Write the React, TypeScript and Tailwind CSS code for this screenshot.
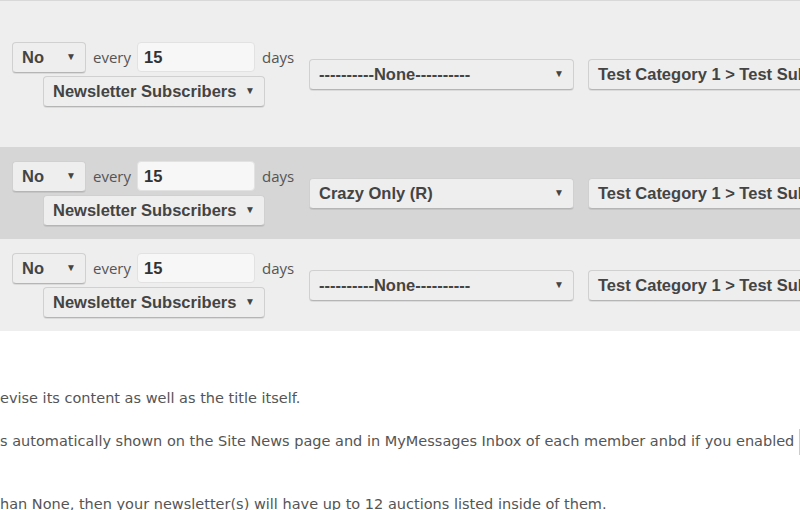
import React from "react";

const Caret = () => (
  <span className="text-[10px] leading-none text-[#444] shrink-0">▼</span>
);

function Sel({ label, w }: { label: string; w: string }) {
  return (
    <div
      className={`${w} shrink-0 h-[31px] px-[9px] flex items-center justify-between rounded-[4px] border border-[#d0d0d0] border-b-[#b5b5b5] bg-[#eeeeee] shadow-[0_1px_0_rgba(0,0,0,0.08)] text-[16.5px] font-bold text-[#444] whitespace-nowrap overflow-hidden`}
      style={{ fontFamily: '"Liberation Sans", Arial, sans-serif' }}
    >
      <span>{label}</span>
      <Caret />
    </div>
  );
}

function Row({ bg, h, middle }: { bg: string; h: string; middle: string }) {
  return (
    <div className={`${bg} ${h} flex items-center overflow-hidden`}>
      <div className="w-[297px] shrink-0 pl-[12px] flex flex-col items-start">
        <div className="flex items-center">
          <Sel label="No" w="w-[74px]" />
          <span className="ml-[7px] text-[15px] text-[#555]" style={{ fontFamily: '"Open Sans", sans-serif' }}>every</span>
          <div
            className="ml-[6px] shrink-0 w-[118px] h-[30px] rounded-[4px] border border-[#e2e2e2] bg-[#f7f7f7] flex items-center pl-[6px] text-[16.5px] font-bold text-[#333]"
            style={{ fontFamily: '"Liberation Sans", Arial, sans-serif' }}
          >
            15
          </div>
          <span className="ml-[7px] text-[15px] text-[#555]" style={{ fontFamily: '"Open Sans", sans-serif' }}>days</span>
        </div>
        <div className="mt-[3px] ml-[31px]">
          <Sel label="Newsletter Subscribers" w="w-[222px]" />
        </div>
      </div>
      <div className="ml-[12px] shrink-0">
        <Sel label={middle} w="w-[265px]" />
      </div>
      <div className="ml-[14px] shrink-0">
        <Sel label="Test Category 1 > Test Subcategory" w="w-[320px]" />
      </div>
    </div>
  );
}

export default function App() {
  return (
    <div className="w-[800px] h-[510px] overflow-hidden bg-white">
      <div className="border-t border-[#d8d8d8]">
        <Row bg="bg-[#eeeeee]" h="h-[146px]" middle="----------None----------" />
        <Row bg="bg-[#d6d6d6]" h="h-[92px]" middle="Crazy Only (R)" />
        <Row bg="bg-[#eeeeee]" h="h-[92px]" middle="----------None----------" />
      </div>
      <div
        className="text-[14.5px] text-[#555] whitespace-nowrap"
        style={{ fontFamily: '"DejaVu Sans", Verdana, sans-serif' }}
      >
        <p className="mt-[59px] leading-[17px]">evise its content as well as the title itself.</p>
        <div className="mt-[22px] h-[26px] flex items-center">
          <span>s automatically shown on the Site News page and in MyMessages Inbox of each member anbd if you enabled</span>
          <span className="ml-[5px] shrink-0 inline-block w-[10px] h-[26px] border border-[#ccc] bg-[#f5f5f5]" />
        </div>
        <p className="mt-[41px] leading-[17px]">han None, then your newsletter(s) will have up to 12 auctions listed inside of them.</p>
      </div>
    </div>
  );
}
